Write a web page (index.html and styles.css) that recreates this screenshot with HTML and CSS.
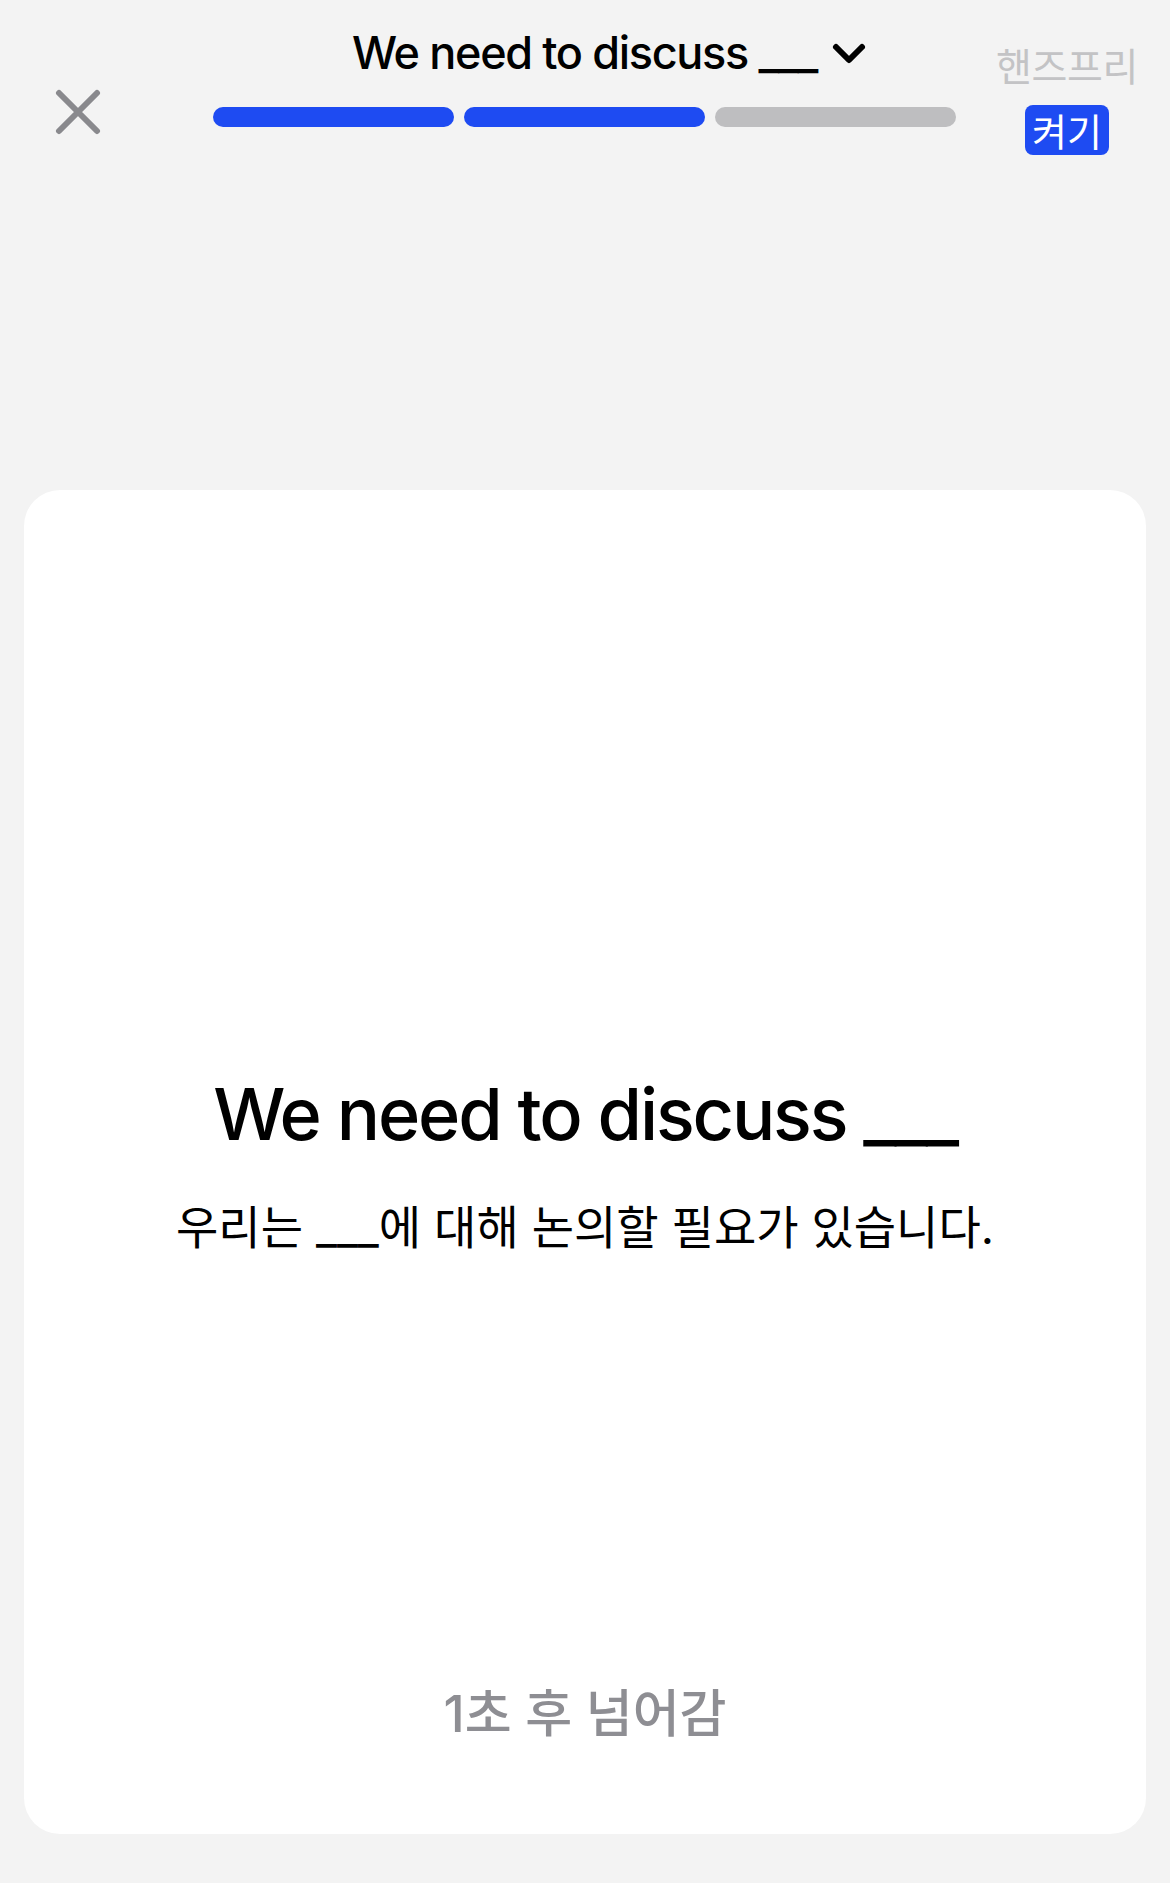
FILE: index.html
```html
<!DOCTYPE html>
<html lang="ko">
<head>
  <meta charset="UTF-8">
  <meta name="viewport" content="width=device-width, initial-scale=1.0">
  <title>We need to discuss ___</title>
  <link rel="stylesheet" href="styles.css">
</head>
<body>
  <div class="topbar">
    <button class="close-button" aria-label="닫기">
      <svg width="46" height="46" viewBox="0 0 46 46">
        <path d="M4 4 L42 42 M42 4 L4 42" stroke="#89898d" stroke-width="6" stroke-linecap="round" fill="none"/>
      </svg>
    </button>

    <!-- 문장 제목과 진행 막대 -->
    <div class="progress-area">
      <div class="sentence-title">
        <span>We need to discuss ___</span>
        <svg class="chevron" width="36" height="24" viewBox="0 0 36 24">
          <path d="M5 5 L18 18 L31 5" stroke="#000" stroke-width="6" stroke-linecap="round" stroke-linejoin="round" fill="none"/>
        </svg>
      </div>
      <div class="progress-bars">
        <div class="bar done"></div>
        <div class="bar done"></div>
        <div class="bar"></div>
      </div>
    </div>

    <div class="handsfree">
      <span class="handsfree-label">핸즈프리</span>
      <button class="handsfree-toggle">켜기</button>
    </div>
  </div>

  <!-- 카드 -->
  <div class="card">
    <div class="card-body">
      <h2 class="english">We need to discuss ___</h2>
      <p class="korean">우리는 ___에 대해 논의할 필요가 있습니다.</p>
    </div>
    <div class="card-footer">1초 후 넘어감</div>
  </div>
</body>
</html>
```

FILE: styles.css
```css
body {
  background-color: #f3f3f3;
  font-family: Inter, "Noto Sans CJK KR", sans-serif;
  margin: 0;
  padding: 0;
  color: #000;
}
.topbar {
  display: flex;
  align-items: flex-start;
  height: 490px;
}
.close-button {
  background: none;
  border: none;
  padding: 0;
  margin: 89px 0 0 55px;
  width: 46px;
  height: 46px;
  cursor: pointer;
}
.close-button svg {
  display: block;
}
.progress-area {
  width: 743px;
  margin-left: 112px;
  padding-top: 26px;
}
.sentence-title {
  position: relative;
  text-align: center;
  font-size: 45px;
  line-height: 54px;
  letter-spacing: -0.03em;
  font-weight: 500;
  height: 54px;
}
.chevron {
  position: absolute;
  top: 16px;
  left: 618px;
}
.progress-bars {
  display: flex;
  gap: 10px;
  margin-top: 27px;
}
.bar {
  flex: 1;
  height: 20px;
  border-radius: 10px;
  background-color: #bebec0;
}
.bar.done {
  background-color: #1e4bf2;
}
.handsfree {
  display: flex;
  flex-direction: column;
  align-items: center;
  margin: 40px 32px 0 auto;
}
.handsfree-label {
  font-family: "Noto Sans CJK KR", sans-serif;
  font-size: 39px;
  line-height: 48px;
  color: #c3c3c5;
  letter-spacing: -0.01em;
}
.handsfree-toggle {
  margin-top: 17px;
  font-family: "Noto Sans CJK KR", sans-serif;
  font-size: 38px;
  line-height: 50px;
  color: #fff;
  background-color: #1e4bf2;
  border: none;
  border-radius: 8px;
  padding: 0 7px;
  cursor: pointer;
}
.card {
  background-color: #fff;
  margin: 0 24px;
  height: 1344px;
  border-radius: 36px;
  display: grid;
  grid-template-rows: 1fr auto 1fr;
}
.card-body {
  grid-row: 2;
  text-align: center;
  padding-top: 4px;
}
.english {
  margin: 0;
  font-size: 72px;
  line-height: 86px;
  font-weight: 500;
  letter-spacing: -0.03em;
}
.korean {
  margin: 40px 0 0;
  font-size: 46px;
  line-height: 60px;
}
.card-footer {
  grid-row: 3;
  align-self: end;
  text-align: center;
  font-family: Inter, "Noto Sans CJK KR", sans-serif;
  font-size: 51px;
  font-weight: 500;
  line-height: 64px;
  color: #8e8e93;
  padding-bottom: 88px;
}
```
